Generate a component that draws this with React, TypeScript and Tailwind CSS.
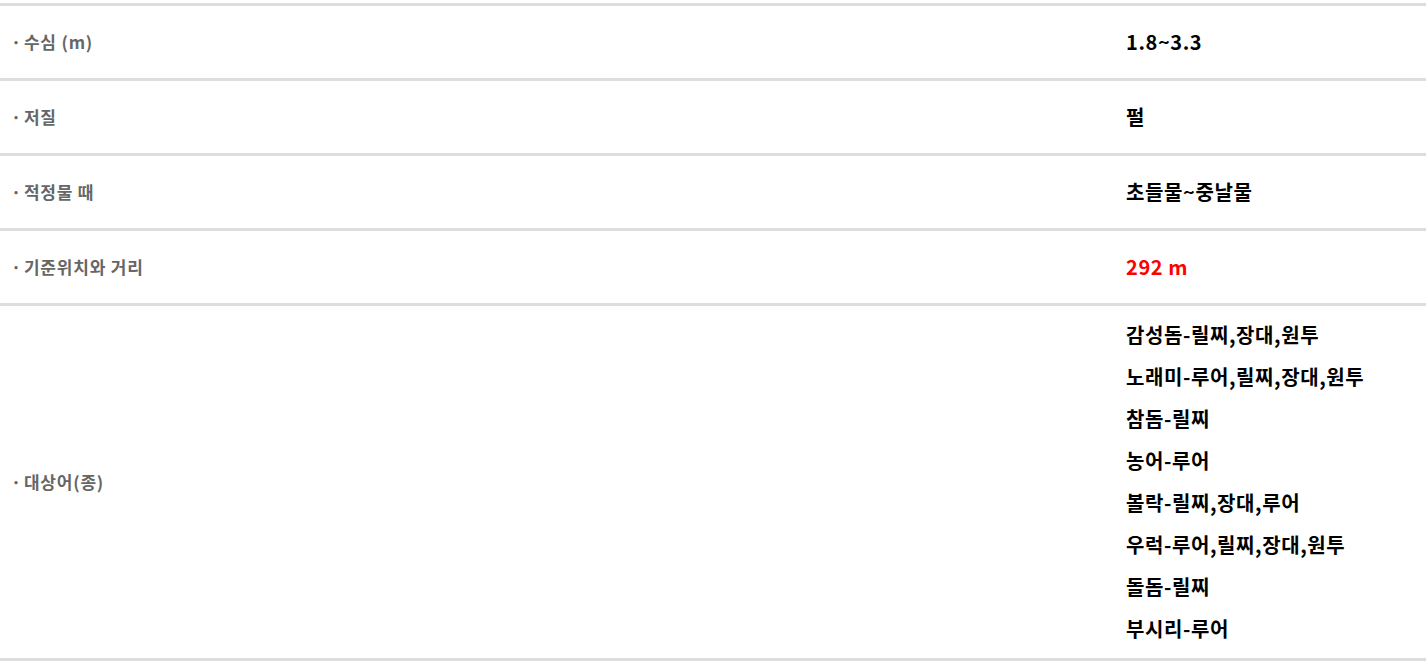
const font = { fontFamily: '"Noto Sans CJK KR", "Noto Sans", sans-serif' }

const rows: { label: string; values: string[]; red?: boolean }[] = [
  { label: '수심 (m)', values: ['1.8~3.3'] },
  { label: '저질', values: ['펄'] },
  { label: '적정물 때', values: ['초들물~중날물'] },
  { label: '기준위치와 거리', values: ['292 m'], red: true },
  {
    label: '대상어(종)',
    values: [
      '감성돔-릴찌,장대,원투',
      '노래미-루어,릴찌,장대,원투',
      '참돔-릴찌',
      '농어-루어',
      '볼락-릴찌,장대,루어',
      '우럭-루어,릴찌,장대,원투',
      '돌돔-릴찌',
      '부시리-루어',
    ],
  },
]

export default function App() {
  return (
    <div className="min-h-[669px] bg-white pt-[3px]" style={font}>
      <div className="border-t-[3px] border-[#dddddd]">
        {rows.map((row) => (
          <div
            key={row.label}
            className="grid grid-cols-[1126px_1fr] border-b-[3px] border-[#dddddd]"
          >
            <div className="flex items-center pl-[11px] text-[17px] font-bold tracking-[0.8px] text-[#666666]">
              <span className="mr-[2px]">·</span>
              {row.label}
            </div>
            <div
              className={
                row.values.length > 1
                  ? 'flex flex-col justify-center py-[8px]'
                  : 'flex min-h-[72px] flex-col justify-center'
              }
            >
              {row.values.map((v) => (
                <div
                  key={v}
                  className={`text-[20px] font-bold leading-[42px] tracking-[0.6px] ${row.red ? 'text-[#ff0000]' : 'text-black'}`}
                >
                  {v}
                </div>
              ))}
            </div>
          </div>
        ))}
      </div>
    </div>
  )
}
